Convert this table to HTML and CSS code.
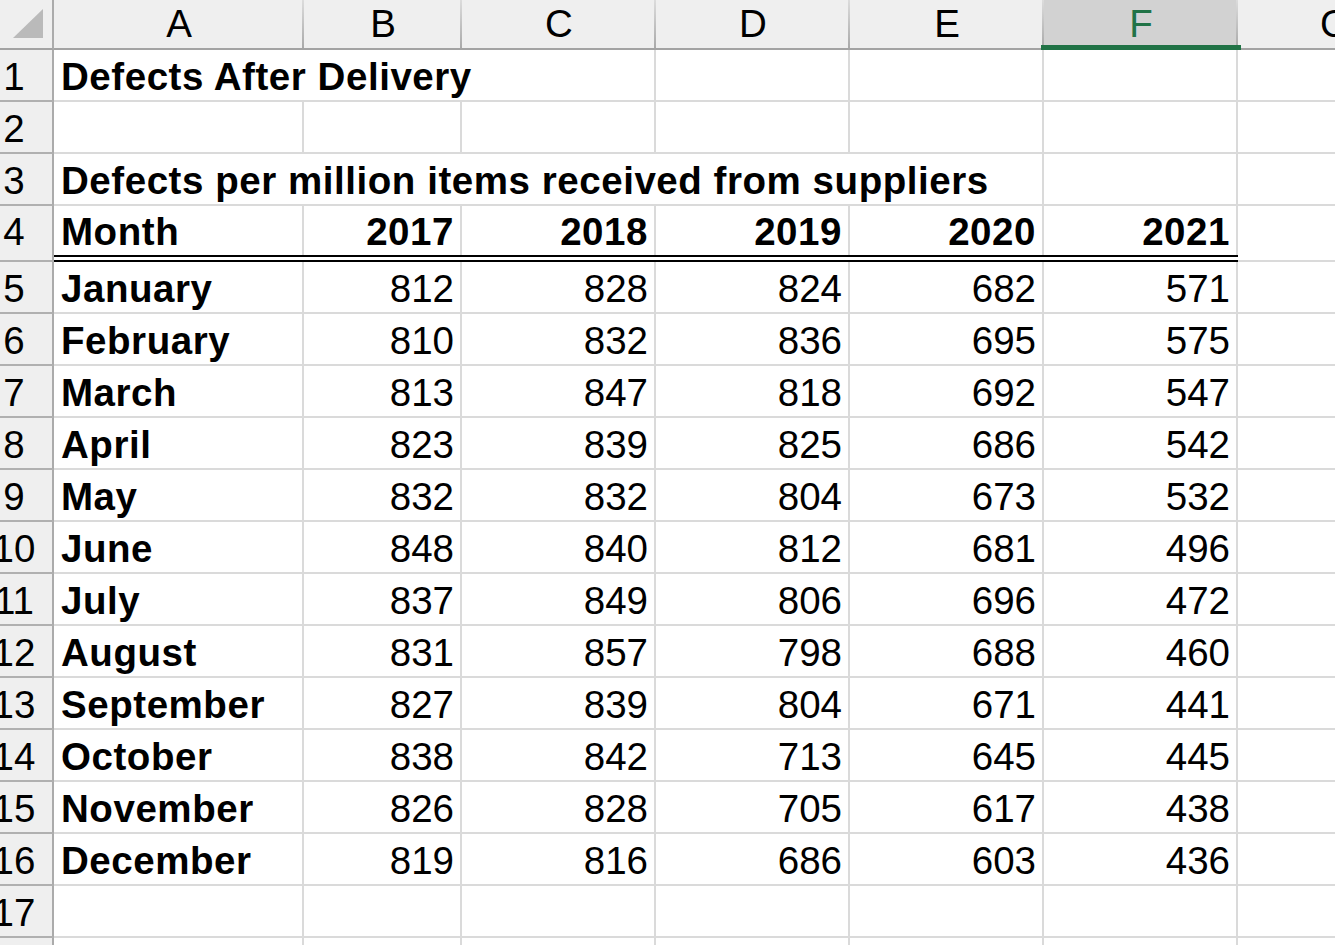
FILE: index.html
```html
<!DOCTYPE html>
<html lang="en">
<head>
<meta charset="utf-8">
<title>Defects After Delivery</title>
<link rel="stylesheet" href="styles.css">
</head>
<body>
<div class="sheet">
  <div class="corner"><svg class="tri" width="30" height="29" viewBox="0 0 30 29"><polygon points="30,0 30,29 0,29" fill="#bababa"/></svg></div>
  <div class="ch">A</div><div class="ch">B</div><div class="ch">C</div><div class="ch">D</div><div class="ch">E</div><div class="ch sel">F</div><div class="ch">G</div>

  <div class="rh"><span>1</span></div>
  <div class="c b span3">Defects After Delivery</div><div class="c"></div><div class="c"></div><div class="c"></div><div class="c"></div>

  <div class="rh"><span>2</span></div>
  <div class="c"></div><div class="c"></div><div class="c"></div><div class="c"></div><div class="c"></div><div class="c"></div><div class="c"></div>

  <div class="rh"><span>3</span></div>
  <div class="c b span5">Defects per million items received from suppliers</div><div class="c"></div><div class="c"></div>

  <div class="rh rh4"><span>4</span></div>
  <div class="c b r4">Month</div><div class="c b n r4">2017</div><div class="c b n r4">2018</div><div class="c b n r4">2019</div><div class="c b n r4">2020</div><div class="c b n r4">2021</div><div class="c g4"></div>
  <div class="rule"></div>

  <div class="rh"><span>5</span></div>
  <div class="c b">January</div><div class="c n">812</div><div class="c n">828</div><div class="c n">824</div><div class="c n">682</div><div class="c n">571</div><div class="c"></div>

  <div class="rh"><span>6</span></div>
  <div class="c b">February</div><div class="c n">810</div><div class="c n">832</div><div class="c n">836</div><div class="c n">695</div><div class="c n">575</div><div class="c"></div>

  <div class="rh"><span>7</span></div>
  <div class="c b">March</div><div class="c n">813</div><div class="c n">847</div><div class="c n">818</div><div class="c n">692</div><div class="c n">547</div><div class="c"></div>

  <div class="rh"><span>8</span></div>
  <div class="c b">April</div><div class="c n">823</div><div class="c n">839</div><div class="c n">825</div><div class="c n">686</div><div class="c n">542</div><div class="c"></div>

  <div class="rh"><span>9</span></div>
  <div class="c b">May</div><div class="c n">832</div><div class="c n">832</div><div class="c n">804</div><div class="c n">673</div><div class="c n">532</div><div class="c"></div>

  <div class="rh"><span>10</span></div>
  <div class="c b">June</div><div class="c n">848</div><div class="c n">840</div><div class="c n">812</div><div class="c n">681</div><div class="c n">496</div><div class="c"></div>

  <div class="rh"><span>11</span></div>
  <div class="c b">July</div><div class="c n">837</div><div class="c n">849</div><div class="c n">806</div><div class="c n">696</div><div class="c n">472</div><div class="c"></div>

  <div class="rh"><span>12</span></div>
  <div class="c b">August</div><div class="c n">831</div><div class="c n">857</div><div class="c n">798</div><div class="c n">688</div><div class="c n">460</div><div class="c"></div>

  <div class="rh"><span>13</span></div>
  <div class="c b">September</div><div class="c n">827</div><div class="c n">839</div><div class="c n">804</div><div class="c n">671</div><div class="c n">441</div><div class="c"></div>

  <div class="rh"><span>14</span></div>
  <div class="c b">October</div><div class="c n">838</div><div class="c n">842</div><div class="c n">713</div><div class="c n">645</div><div class="c n">445</div><div class="c"></div>

  <div class="rh"><span>15</span></div>
  <div class="c b">November</div><div class="c n">826</div><div class="c n">828</div><div class="c n">705</div><div class="c n">617</div><div class="c n">438</div><div class="c"></div>

  <div class="rh"><span>16</span></div>
  <div class="c b">December</div><div class="c n">819</div><div class="c n">816</div><div class="c n">686</div><div class="c n">603</div><div class="c n">436</div><div class="c"></div>

  <div class="rh"><span>17</span></div>
  <div class="c"></div><div class="c"></div><div class="c"></div><div class="c"></div><div class="c"></div><div class="c"></div><div class="c"></div>

  <div class="rh"><span>18</span></div>
  <div class="c"></div><div class="c"></div><div class="c"></div><div class="c"></div><div class="c"></div><div class="c"></div><div class="c"></div>
</div>
</body>
</html>
```

FILE: styles.css
```css
*, *::before, *::after { box-sizing: border-box; }

html, body {
  margin: 0;
  height: 100%;
  overflow: hidden;
  background: #ffffff;
}

body {
  font-family: "Liberation Sans", Arial, sans-serif;
  font-size: 38.5px;
  color: #000000;
}

.sheet {
  display: grid;
  grid-template-columns: 54px 250px 158px repeat(5, 194px);
  grid-template-rows: 50px repeat(3, 52px) 49px 7px repeat(14, 52px);
  width: max-content;
}

.corner {
  background: #efefef;
  border-right: 2px solid #ababab;
  border-bottom: 2px solid #a3a3a3;
  display: flex;
  justify-content: flex-end;
  align-items: flex-end;
  padding: 0 9px 10px 0;
}

.tri { display: block; }

.ch {
  background: linear-gradient(#dcdcdc, #a9a9a9) right top / 2px 100% no-repeat, #efefef;
  border-bottom: 2px solid #a3a3a3;
  text-align: center;
  line-height: 48px;
  white-space: nowrap;
}

.ch.sel {
  background-color: #d2d2d2;
  color: #217346;
  position: relative;
}

.ch.sel::after {
  content: "";
  position: absolute;
  left: -3px;
  right: -3px;
  bottom: -2px;
  height: 5px;
  background: #217346;
}

.rh {
  background: #efefef;
  border-right: 2px solid #ababab;
  border-bottom: 2px solid #b0b0b0;
  overflow: hidden;
  line-height: 52px;
  padding-top: 1px;
}

.rh span {
  display: block;
  width: 76px;
  margin-left: -24px;
  text-align: center;
}

.rh4 {
  grid-row: span 2;
  line-height: 50px;
}

.c {
  border-right: 2px solid #dadada;
  border-bottom: 2px solid #dadada;
  line-height: 52px;
  padding: 1px 6px 0 7px;
  white-space: nowrap;
}

.b {
  font-weight: bold;
  letter-spacing: 0.55px;
}

.n { text-align: right; }

.span3 { grid-column: span 3; }
.span5 { grid-column: span 5; }

.r4 {
  border-bottom: none;
  line-height: 50px;
}

.g4 { grid-row: span 2; }

.rule {
  grid-column: 2 / 8;
  grid-row: 6;
  border-top: 2px solid #000000;
  border-bottom: 2px solid #000000;
  background: #ffffff;
}
```
